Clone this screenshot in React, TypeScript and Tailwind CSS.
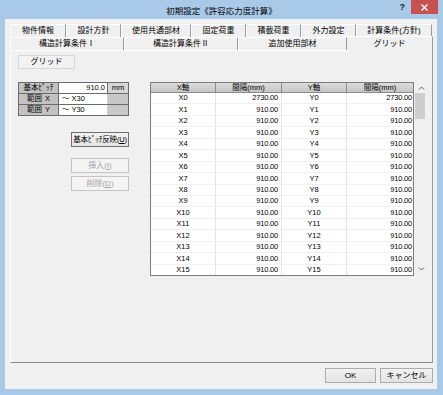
const ui = "[font-family:'Liberation_Sans','Noto_Sans_CJK_JP',sans-serif]";
const narrow = "[font-family:'Liberation_Sans_Narrow','Liberation_Sans','Noto_Sans_CJK_JP',sans-serif]";

const tabsBack = [
  { label: "物件情報", w: "w-[56px]" },
  { label: "設計方針", w: "w-[55px]" },
  { label: "使用共通部材", w: "w-[70px]" },
  { label: "固定荷重", w: "w-[55px]" },
  { label: "積載荷重", w: "w-[55px]" },
  { label: "外力設定", w: "w-[55px]" },
  { label: "計算条件(方針)", w: "w-[76px]" },
];

const tabsFront = [
  { label: "構造計算条件Ⅰ", w: "w-[114px]" },
  { label: "構造計算条件Ⅱ", w: "w-[114px]" },
  { label: "追加使用部材", w: "w-[109px]" },
];

const rows = Array.from({ length: 16 }, (_, i) => ({
  x: `X${i}`,
  dx: i === 0 ? "2730.00" : "910.00",
  y: `Y${i}`,
  dy: i === 0 ? "2730.00" : "910.00",
}));

function Tab({ label, w }: { label: string; w: string }) {
  return (
    <div className={`${w} h-[13px] flex items-center justify-center border-t border-l border-r border-t-white border-l-white border-r-[#9a9a9a] text-[8px] text-black leading-none whitespace-nowrap`}>
      {label}
    </div>
  );
}

function WinButton({ children, disabled, focus, w }: { children: React.ReactNode; disabled?: boolean; focus?: boolean; w: string }) {
  return (
    <div
      className={`${w} h-[15px] flex items-center justify-center text-[8px] leading-none whitespace-nowrap border ${
        disabled
          ? "border-[#c4c4c4] bg-[#f4f4f4] text-[#a6a6a6]"
          : focus
          ? "border-[#6f6f6f] bg-linear-to-b from-[#f2f2f2] to-[#e3e3e3] text-black"
          : "border-[#acacac] bg-linear-to-b from-[#f2f2f2] to-[#e3e3e3] text-black"
      }`}
    >
      {children}
    </div>
  );
}

function GridTable() {
  return (
    <div className="flex">
      <div className={`w-[264px] h-[194px] border border-[#7c7c7c] bg-white flex flex-col text-[7.5px] leading-none text-black ${narrow}`}>
        <div className="h-[10px] flex border-b border-[#8a8a8a] bg-linear-to-b from-[#dcdcdc] to-[#c6c6c6]">
          <div className="w-[65px] flex items-center justify-center border-r border-[#8a8a8a]">X軸</div>
          <div className="w-[66px] flex items-center justify-center border-r border-[#8a8a8a]">間隔(mm)</div>
          <div className="w-[65px] flex items-center justify-center border-r border-[#8a8a8a]">Y軸</div>
          <div className="flex-1 flex items-center justify-center">間隔(mm)</div>
        </div>
        {rows.map((r) => (
          <div key={r.x} className="flex-1 flex border-b border-[#f0f0f0] last:border-b-0">
            <div className="w-[65px] flex items-center justify-center border-r border-[#e4e4e4]">{r.x}</div>
            <div className="w-[66px] flex items-center justify-end pr-[3px] border-r border-[#e4e4e4] tracking-[-0.2px]">{r.dx}</div>
            <div className="w-[65px] flex items-center justify-center border-r border-[#e4e4e4]">{r.y}</div>
            <div className="flex-1 flex items-center justify-end pr-[1px] tracking-[-0.2px]">{r.dy}</div>
          </div>
        ))}
      </div>
      <div className="w-[14px] h-[194px] flex flex-col items-center pt-[1px]">
        <svg width="7" height="8" viewBox="0 0 7 8" className="mt-[1px]">
          <path d="M1 5.5 L3.5 3 L6 5.5" fill="none" stroke="#606060" strokeWidth="1" />
        </svg>
        <div className="w-[10px] h-[26px] bg-[#cdcdcd] mt-[1px] ml-[-2px]" />
        <div className="flex-1" />
        <svg width="7" height="8" viewBox="0 0 7 8" className="mb-[3px]">
          <path d="M1 2.5 L3.5 5 L6 2.5" fill="none" stroke="#606060" strokeWidth="1" />
        </svg>
      </div>
    </div>
  );
}

function PitchTable() {
  return (
    <div className="w-[111px] border border-[#6a6a6a] flex flex-col text-[7.5px] leading-none text-black">
      <div className="h-[11px] flex border-b border-[#6a6a6a]">
        <div className="w-[40px] bg-[#c2c2c2] border-r border-[#6a6a6a] flex items-center justify-center whitespace-nowrap">基本ﾋﾟｯﾁ</div>
        <div className={`w-[49px] bg-white border-r border-[#6a6a6a] flex items-center justify-end pr-[2px] ${narrow}`}>910.0</div>
        <div className="flex-1 bg-[#d6d6d6] flex items-center justify-center">mm</div>
      </div>
      <div className="h-[11px] flex border-b border-[#6a6a6a]">
        <div className="w-[40px] bg-[#c2c2c2] border-r border-[#6a6a6a] flex items-center justify-center gap-[3px]">
          <span>範囲</span>
          <span>X</span>
        </div>
        <div className={`w-[49px] bg-white border-r border-[#d0d0d0] flex items-center pl-[3px] ${narrow}`}>～ X30</div>
        <div className="flex-1 bg-[#c8c8c8]" />
      </div>
      <div className="h-[10px] flex">
        <div className="w-[40px] bg-[#c2c2c2] border-r border-[#6a6a6a] flex items-center justify-center gap-[3px]">
          <span>範囲</span>
          <span>Y</span>
        </div>
        <div className={`w-[49px] bg-white border-r border-[#d0d0d0] flex items-center pl-[3px] ${narrow}`}>～ Y30</div>
        <div className="flex-1 bg-[#c8c8c8]" />
      </div>
    </div>
  );
}

export default function App() {
  return (
    <div className={`w-[443px] h-[395px] bg-[#a9c9e9] flex flex-col ${ui}`}>
      <div className="h-[19px] grid grid-cols-[1fr_auto_1fr]">
        <div />
        <div className="pt-[7px] text-[8.5px] leading-none text-black">初期設定《許容応力度計算》</div>
        <div className="flex justify-end items-start pr-[5px]">
          <div className="pt-[3px] pr-[6px] text-[9px] font-bold leading-none text-[#222]">?</div>
          <div className="w-[27px] h-[14px] bg-[#c75050] flex items-center justify-center">
            <svg width="7" height="7" viewBox="0 0 7 7">
              <path d="M0.5 0.5 L6.5 6.5 M6.5 0.5 L0.5 6.5" stroke="white" strokeWidth="1.4" />
            </svg>
          </div>
        </div>
      </div>

      <div className="flex-1 ml-[5px] mr-[6px] mb-[6px] bg-[#f0f0f0] flex flex-col pl-[5px] pr-[4px] pt-[5px]">
        <div className="flex h-[13px]">
          {tabsBack.map((t) => (
            <Tab key={t.label} {...t} />
          ))}
        </div>
        <div className="flex h-[13px] items-end">
          {tabsFront.map((t) => (
            <Tab key={t.label} {...t} />
          ))}
          <div className="relative z-10 w-[86px] h-[15px] -mb-[1px] bg-[#f0f0f0] flex items-start justify-center pt-[3px] border-t border-r border-t-white border-r-[#9a9a9a] text-[8px] leading-none text-black">
            グリッド
          </div>
        </div>

        <div className="h-[313px] border border-t-white border-l-white border-r-[#9a9a9a] border-b-[#8a8a8a] flex flex-col pl-[7px] pt-[4px]">
          <div className="w-[57px] h-[14px] border border-[#d6d6d6] bg-[#f2f2f2] flex items-center justify-center text-[8px] leading-none text-black">
            グリッド
          </div>
          <div className="flex mt-[13px] gap-[21px]">
            <div className="w-[111px] flex flex-col">
              <PitchTable />
              <div className="flex flex-col items-end mt-[16px]">
                <WinButton w="w-[58px]" focus>
                  <span className="text-[7.5px] tracking-[-0.2px]">
                    基本ﾋﾟｯﾁ反映(<span className="underline">U</span>)
                  </span>
                </WinButton>
                <div className="h-[11px]" />
                <WinButton w="w-[58px]" disabled>
                  挿入(<span className="underline">I</span>)
                </WinButton>
                <div className="h-[3px]" />
                <WinButton w="w-[58px]" disabled>
                  削除(<span className="underline">D</span>)
                </WinButton>
              </div>
            </div>
            <GridTable />
          </div>
        </div>

        <div className="flex justify-end gap-[4px] pt-[5px]">
          <WinButton w="w-[51px]">OK</WinButton>
          <WinButton w="w-[53px]">キャンセル</WinButton>
        </div>
      </div>
    </div>
  );
}
